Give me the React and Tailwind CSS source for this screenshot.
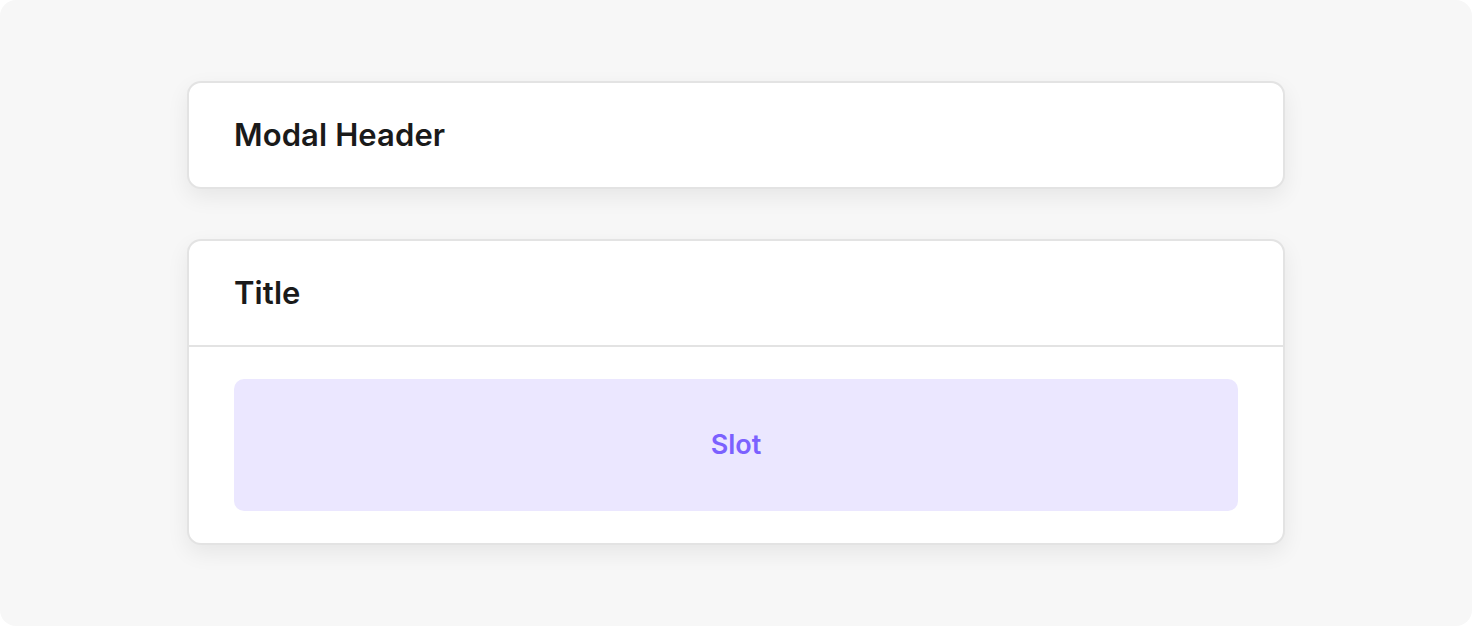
const Card = ({ children }) => (
  <div className="w-[1098px] bg-white rounded-[14px] border-2 border-[#e3e3e3] shadow-[0_8px_22px_rgba(0,0,0,0.07)] overflow-hidden">
    {children}
  </div>
);

export default function App() {
  return (
    <div className="w-[1472px] h-[626px] bg-white" style={{ fontFamily: "Inter, 'Noto Sans', sans-serif" }}>
      <div className="w-full h-full bg-[#f7f7f7] rounded-2xl flex flex-col items-center justify-center gap-[50px]">
        <Card>
          <div className="h-[104px] flex items-center px-[45px]">
            <h1 className="text-[31px] font-semibold text-[#1a1a1a] tracking-[0.1px]">Modal Header</h1>
          </div>
        </Card>

        <Card>
          <div className="h-[106px] flex items-center px-[45px] border-b-2 border-[#e3e3e3]">
            <h2 className="text-[31px] font-semibold text-[#1a1a1a] tracking-[0.1px]">Title</h2>
          </div>
          <div className="px-[45px] py-[32px]">
            <div className="h-[132px] rounded-[10px] bg-[#ebe7ff] flex items-center justify-center">
              <span className="text-[27px] font-semibold text-[#7b61ff]">Slot</span>
            </div>
          </div>
        </Card>
      </div>
    </div>
  );
}
